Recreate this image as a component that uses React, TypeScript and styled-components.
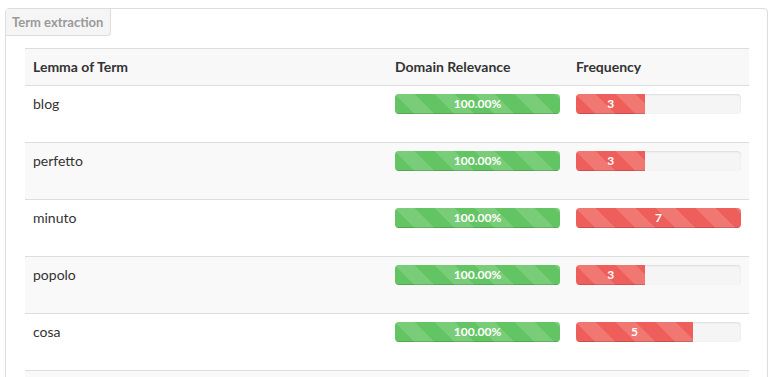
import styled, { createGlobalStyle } from 'styled-components'

const GlobalStyle = createGlobalStyle`
  body {
    margin: 0;
    background: #fff;
    font-family: Lato, "Open Sans", sans-serif;
    color: #333;
  }
`;

const Panel = styled.div`
  margin: 8px 6px 0 5px;
  border: 1px solid #ddd;
  border-radius: 4px;
  min-height: 400px;
`;

const Tab = styled.div`
  display: inline-block;
  box-sizing: border-box;
  height: 27px;
  padding: 0 7px 0 6px;
  line-height: 26px;
  background: #f5f5f5;
  border-right: 1px solid #ddd;
  border-bottom: 1px solid #ddd;
  border-bottom-right-radius: 4px;
  color: #9a9a9a;
  font-size: 13px;
  font-weight: 700;
`;

const TableWrap = styled.div`
  padding: 12px 18px 0 19px;
`;

const Table = styled.table`
  width: 100%;
  border-collapse: collapse;
  table-layout: fixed;
`;

const HeadCell = styled.th<{ $w: number }>`
  width: ${p => p.$w}px;
  text-align: left;
  padding: 8px;
  height: 20px;
  line-height: 20px;
  font-size: 14px;
  font-weight: 700;
  color: #333;
  background: #f8f8f8;
  border-top: 1px solid #ddd;
  border-bottom: 1px solid #ddd;
`;

const Row = styled.tr<{ $striped: boolean }>`
  background: ${p => (p.$striped ? '#f9f9f9' : '#fff')};
  border-top: 1px solid #ddd;
`;

const Cell = styled.td`
  padding: 8px;
  vertical-align: top;
  font-size: 14px;
  line-height: 20px;
  color: #333;
`;

const Progress = styled.div`
  height: 20px;
  margin-bottom: 20px;
  border-radius: 4px;
  background: #f5f5f5;
  box-shadow: inset 0 1px 2px rgba(0, 0, 0, 0.1);
  overflow: hidden;
`;

const Bar = styled.div<{ $color: string }>`
  height: 100%;
  background-color: ${p => p.$color};
  background-image: linear-gradient(
    45deg,
    rgba(255, 255, 255, 0.15) 25%,
    transparent 25%,
    transparent 50%,
    rgba(255, 255, 255, 0.15) 50%,
    rgba(255, 255, 255, 0.15) 75%,
    transparent 75%,
    transparent
  );
  background-size: 40px 40px;
  box-shadow: inset 0 -1px 0 rgba(0, 0, 0, 0.15);
  color: #fff;
  font-size: 12px;
  font-weight: 700;
  line-height: 20px;
  text-align: center;
  white-space: nowrap;
`;

const terms = [
  { lemma: 'blog', freq: 3 },
  { lemma: 'perfetto', freq: 3 },
  { lemma: 'minuto', freq: 7 },
  { lemma: 'popolo', freq: 3 },
  { lemma: 'cosa', freq: 5 },
  { lemma: '', freq: 0 },
];

const maxFreq = 7;

export default function App() {
  return (
    <>
      <GlobalStyle />
      <Panel>
        <Tab>Term extraction</Tab>
        <TableWrap>
          <Table>
            <thead>
              <tr>
                <HeadCell $w={346}>Lemma of Term</HeadCell>
                <HeadCell $w={165}>Domain Relevance</HeadCell>
                <HeadCell $w={165}>Frequency</HeadCell>
              </tr>
            </thead>
            <tbody>
              {terms.map((t, i) => (
                <Row key={i} $striped={i % 2 === 1}>
                  <Cell>{t.lemma}</Cell>
                  <Cell>
                    {t.lemma && (
                      <Progress>
                        <Bar $color="#62c462" style={{ width: '100%' }}>100.00%</Bar>
                      </Progress>
                    )}
                  </Cell>
                  <Cell>
                    {t.lemma && (
                      <Progress>
                        <Bar $color="#ee5f5b" style={{ width: `${Math.floor((t.freq / maxFreq) * 100)}%` }}>
                          {t.freq}
                        </Bar>
                      </Progress>
                    )}
                  </Cell>
                </Row>
              ))}
            </tbody>
          </Table>
        </TableWrap>
      </Panel>
    </>
  )
}
